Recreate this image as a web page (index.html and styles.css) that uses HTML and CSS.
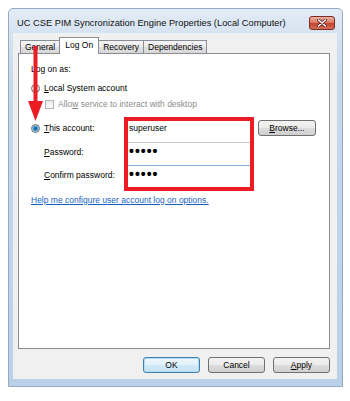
FILE: index.html
```html
<!DOCTYPE html>
<html>
<head>
<meta charset="utf-8">
<link rel="stylesheet" href="styles.css">
</head>
<body>
<div class="window">
  <div class="titlebar">
    <span class="title">UC CSE PIM Syncronization Engine Properties (Local Computer)</span>
    <span class="close">
      <svg width="10" height="8" viewBox="0 0 10 8">
        <path d="M1.5 1 L8.5 7 M8.5 1 L1.5 7" stroke="#5a2018" stroke-width="3" stroke-linecap="round"/>
        <path d="M1.5 1 L8.5 7 M8.5 1 L1.5 7" stroke="#ffffff" stroke-width="1.6" stroke-linecap="round"/>
      </svg>
    </span>
  </div>
  <div class="dialog">
    <div class="tabs">
      <div class="tab">General</div>
      <div class="tab active">Log On</div>
      <div class="tab">Recovery</div>
      <div class="tab">Dependencies</div>
    </div>
    <div class="panel">
      <div class="line">Log on as:</div>
      <div class="option"><span class="radio"></span><span><u>L</u>ocal System account</span></div>
      <div class="option sub disabled"><span class="check"></span><span>Allo<u>w</u> service to interact with desktop</span></div>
      <div class="account">
        <div class="labels">
          <div class="label"><span class="radio on"></span><span><u>T</u>his account:</span></div>
          <div class="label indent"><span><u>P</u>assword:</span></div>
          <div class="label indent"><span><u>C</u>onfirm password:</span></div>
        </div>
        <div class="redbox">
          <div class="field first">superuser</div>
          <div class="field dots focus">•••••</div>
          <div class="field dots last">•••••</div>
        </div>
        <button class="btn browse"><u>B</u>rowse...</button>
      </div>
      <a class="help">Help me configure user account log on options.</a>
    </div>
    <div class="buttons">
      <button class="btn default">OK</button>
      <button class="btn">Cancel</button>
      <button class="btn"><u>A</u>pply</button>
    </div>
  </div>
  <svg class="arrow" width="40" height="120" viewBox="0 0 40 120">
    <rect x="24.5" y="37" width="4" height="57" fill="#ec1c24"/>
    <polygon points="19,92 34,92 26.5,112" fill="#ec1c24"/>
  </svg>
</div>
</body>
</html>
```

FILE: styles.css
```css
body {
  margin: 0;
  background: #ffffff;
  font-family: "Liberation Sans", Arial, sans-serif;
}

.window {
  position: relative;
  box-sizing: border-box;
  width: 335px;
  height: 379px;
  margin: 8px 0 0 8px;
  border: 1px solid #97a9be;
  border-radius: 5px 5px 0 0;
  padding: 0 5px 7px 4px;
  background: linear-gradient(to bottom, #e4ecf6 0, #d6e3f1 24px, #c5d9ee 70px, #bad1ea 100%);
  display: flex;
  flex-direction: column;
}

.titlebar {
  height: 24px;
  box-sizing: border-box;
  padding: 3px 2px 0 4px;
  display: flex;
  align-items: center;
  justify-content: space-between;
}

.title {
  font-size: 9.3px;
  color: #111111;
  white-space: nowrap;
}

.close {
  width: 26px;
  height: 14px;
  box-sizing: border-box;
  border: 1px solid #7a2c22;
  border-radius: 3px;
  background: linear-gradient(to bottom, #eab1a4 0, #dc7a66 45%, #c5432c 55%, #d4705a 100%);
  display: flex;
  align-items: center;
  justify-content: center;
}

.dialog {
  flex: 1;
  background: #f0f0f0;
  padding: 4px 7px 6px 5px;
  display: flex;
  flex-direction: column;
  font-size: 8.5px;
  color: #000;
}

.tabs {
  height: 16px;
  display: flex;
  align-items: flex-end;
  padding-left: 2px;
}

.tab {
  height: 12px;
  line-height: 12px;
  border: 1px solid #898c95;
  border-bottom: 0;
  padding: 0 4px;
  margin-left: -1px;
  background: linear-gradient(to bottom, #f4f4f4 0, #ececec 50%, #e0e0e0 50%, #d8d8d8 100%);
  white-space: nowrap;
}

.tab:first-child {
  margin-left: 0;
}

.tab.active {
  position: relative;
  z-index: 1;
  height: 16px;
  line-height: 15px;
  margin-bottom: -1px;
  padding: 0 5px;
  background: #ffffff;
}

.panel {
  height: 296px;
  box-sizing: border-box;
  border: 1px solid #898c95;
  background: #ffffff;
  padding: 8px 0 0 12px;
}

.line {
  height: 14px;
  line-height: 14px;
}

.option {
  display: flex;
  align-items: center;
  gap: 4px;
  height: 14px;
  line-height: 14px;
  margin-top: 5px;
}

.option.sub {
  margin-top: 2px;
  padding-left: 14px;
}

.disabled {
  color: #8c8c8c;
}

.radio {
  width: 9px;
  height: 9px;
  box-sizing: border-box;
  border-radius: 50%;
  border: 1px solid #6d6d6d;
  background: radial-gradient(circle at 50% 40%, #ffffff 0, #e6e6e6 60%, #c9c9c9 100%);
  flex: none;
}

.radio.on {
  background: radial-gradient(circle at 50% 50%, #15507f 0, #2a7cc0 1.5px, #5ab1e6 2.6px, #b7d6ec 3.3px, #e4e4e4 3.8px);
}

.check {
  width: 9px;
  height: 9px;
  box-sizing: border-box;
  border: 1px solid #b4b4b4;
  background: linear-gradient(to bottom, #ececec, #fbfbfb);
  flex: none;
}

.account {
  display: flex;
  align-items: flex-start;
  margin-top: 6px;
}

.labels {
  width: 93px;
  padding-top: 4px;
  display: flex;
  flex-direction: column;
}

.label {
  height: 23.5px;
  display: flex;
  align-items: flex-start;
  gap: 4px;
  line-height: 14px;
}

.label .radio {
  margin-top: 2.5px;
}

.label.indent {
  padding-left: 13px;
}

.redbox {
  width: 130px;
  box-sizing: border-box;
  border: 4px solid #ec1c24;
  background: #ffffff;
}

.field {
  height: 23px;
  box-sizing: border-box;
  padding: 1px 1px 0;
  line-height: 14px;
  border-bottom: 1px solid #c8c8c8;
  white-space: nowrap;
}

.field.first {
  height: 22px;
  padding-top: 0;
}

.field.focus {
  border-bottom-color: #84b3e2;
}

.field.last {
  height: 21px;
  border-bottom: 0;
}

.dots {
  font-size: 14px;
  letter-spacing: 1px;
  font-weight: bold;
}

.btn {
  width: 57px;
  height: 16px;
  box-sizing: border-box;
  border: 1px solid #707070;
  border-radius: 3px;
  background: linear-gradient(to bottom, #f3f3f3 0, #ebebeb 50%, #dddddd 50%, #cfcfcf 100%);
  font-family: inherit;
  font-size: 8.5px;
  line-height: 13px;
  color: #000;
  padding: 0;
}

.btn.default {
  border-color: #3c7fb1;
  background: linear-gradient(to bottom, #eef7fd 0, #e2f1fb 50%, #d2eaf9 50%, #c4e2f6 100%);
  box-shadow: inset 0 0 0 1px #b7dbf3;
}

.browse {
  width: 58px;
  margin: 3px 0 0 4px;
}

.help {
  display: block;
  margin-top: 1px;
  line-height: 14px;
  color: #1a5fbf;
  text-decoration: underline;
}

.buttons {
  margin-top: 8px;
  display: flex;
  justify-content: flex-end;
  gap: 8px;
}

.arrow {
  position: absolute;
  left: 0;
  top: 0;
}
```
